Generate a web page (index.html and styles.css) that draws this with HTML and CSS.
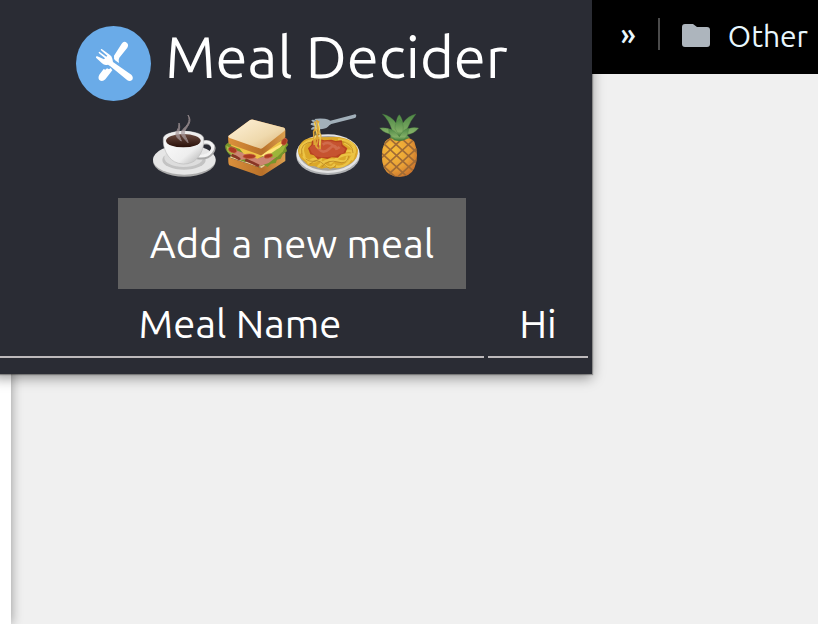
FILE: index.html
```html
<!DOCTYPE html>
<html lang="en">
<head>
<meta charset="utf-8">
<title>Meal Decider</title>
<link rel="stylesheet" href="styles.css">
</head>
<body>
<nav class="bookmarks">
  <button class="more" type="button">»</button>
  <span class="divider"></span>
  <a class="folder" href="#">
    <svg class="folder-icon" viewBox="0 0 28 24" aria-hidden="true"><path d="M3 0h8l4 3h10a3 3 0 0 1 3 3v14a3 3 0 0 1-3 3H3a3 3 0 0 1-3-3V3a3 3 0 0 1 3-3z"/></svg>
    <span>Other</span>
  </a>
</nav>
<div class="page"><div class="sheet"></div></div>

<main class="popup">
  <header class="brand">
    <svg class="logo" viewBox="18 18 225 225" aria-hidden="true">
      <circle cx="130.500" cy="130.500" r="112.500" fill="#6aabe8"/>
      <g fill="#fff">
        <path d="M132 107L155 71Q162 61 171 69Q177 75 172 83L148 113Q145 117 147 129L137 122Q130 116 132 107Z"/>
        <path d="M101 147L106 149L111 145L117 148L122 144L127 151L106 178Q97 187 88 180Q83 174 88 164Z"/>
        <path d="M78 113L96 130Q103 137 114 134L121 139L172 181Q180 186 187 179Q191 171 184 164L129 126L127 116Q126 108 117 103L95 87Q91 86 93 91L112 107L109 110L88 95Q84 95 87 100L105 115L102 118L82 109Q76 109 78 113Z"/>
      </g>
    </svg>
    <h1>Meal Decider</h1>
  </header>

  <div class="meals">
    <svg viewBox="9 15 216 216" role="img" aria-label="Coffee">
      <defs>
        <linearGradient id="cup" x1="0" x2="1" y2="1"><stop stop-color="#fff"/><stop offset=".65" stop-color="#eee"/><stop offset="1" stop-color="#aaa"/></linearGradient>
        <linearGradient id="coffee" x1="0" x2="0" y1="0" y2="1"><stop stop-color="#6a4a40"/><stop offset="1" stop-color="#291009"/></linearGradient>
      </defs>
      <ellipse cx="118" cy="168" rx="94" ry="47" fill="#aaa"/>
      <ellipse cx="118" cy="164" rx="94" ry="45" fill="#e6e6e6"/>
      <ellipse cx="117" cy="165" rx="65" ry="29" fill="#c3c3c3"/>
      <ellipse cx="116" cy="158" rx="58" ry="28" fill="#ddd"/>
      <path d="M166 116C194 104 214 122 200 143C190 156 175 159 157 156" fill="none" stroke="#aaa" stroke-width="13"/>
      <path d="M166 115C194 103 212 122 198 140C188 152 174 155 157 152" fill="none" stroke="#f3f3f3" stroke-width="9"/>
      <path d="M55 101C54 72 177 72 176 101C179 135 159 163 143 171Q115 184 88 170C67 158 53 129 55 101Z" fill="url(#cup)" stroke="#bdbdbd" stroke-width="2"/>
      <ellipse cx="115" cy="103" rx="58" ry="26" fill="#eee"/>
      <ellipse cx="115" cy="107" rx="52" ry="20" fill="url(#coffee)"/>
      <path d="M129 30C143 49 128 62 121 75C113 89 127 99 129 113C117 99 101 88 113 74C126 62 138 49 129 30ZM102 54C108 70 99 79 102 90L109 108C96 100 88 90 96 77Q103 68 102 54Z" fill="#a99b9d" stroke="#a99b9d" stroke-width="3" opacity=".75"/>
    </svg>
    <svg viewBox="12 15 216 216" role="img" aria-label="Sandwich">
      <defs>
        <linearGradient id="bread" x1="0" x2="1" y2="1"><stop stop-color="#fff2d9"/><stop offset=".6" stop-color="#efd9ad"/><stop offset="1" stop-color="#d8ae71"/></linearGradient>
        <linearGradient id="crust" x1="0" x2="1"><stop stop-color="#db913c"/><stop offset=".6" stop-color="#b87029"/><stop offset="1" stop-color="#dca04f"/></linearGradient>
      </defs>
      <path d="M37 157L136 189L208 142V168L142 211Q136 215 129 212L40 181Q36 177 37 157Z" fill="url(#crust)"/>
      <path d="M39 157L108 119L202 145L137 189Z" fill="#edcb94"/>
      <path d="M28 121Q25 132 38 146L49 157L62 160L72 166L87 171L100 169L129 186L143 180L155 186L165 176L179 174L183 164L194 161L201 147L213 139L210 128L217 119L204 96L146 127L54 112Q38 108 28 121Z" fill="#77942b"/>
      <path d="M43 149L59 151L76 165L93 161L130 184L158 174L185 153L173 145L127 160L50 132Z" fill="#cc8572"/>
      <path d="M43 106L133 140L211 99L198 122L164 145L155 147L124 161L96 149L83 146L71 132L46 123Z" fill="#efc446"/>
      <path d="M132 150L203 113L190 131L153 158Z" fill="#ffe47a"/>
      <path d="M31 122L42 128L44 138L57 143L51 151L35 140Z" fill="#a5bd49"/>
      <path d="M158 150L183 133L211 117L201 139L184 155L165 160Z" fill="#9cb53a"/>
      <g fill="#ab3a22" stroke="#c96848" stroke-width="2"><ellipse cx="50" cy="135" rx="13" ry="8" transform="rotate(22 50 135)"/><ellipse cx="100" cy="154" rx="19" ry="7"/><ellipse cx="157" cy="153" rx="13" ry="6" transform="rotate(-12 157 153)"/><ellipse cx="205" cy="110" rx="8" ry="11" transform="rotate(25 205 110)"/></g>
      <path d="M47 150L60 156L72 163M88 164L111 174L129 183" stroke="#883525" stroke-width="8" fill="none"/>
      <path d="M37 93L101 46Q107 42 115 45L204 68Q209 70 208 79V97L139 149Q135 152 130 149L40 117Q35 114 37 93Z" fill="url(#crust)"/>
      <path d="M37 93L101 46Q107 42 115 45L204 68Q210 71 205 78L140 129Q135 133 130 130L41 99Q37 97 37 93Z" fill="url(#bread)"/>
    </svg>
    <svg viewBox="12 15 216 216" role="img" aria-label="Spaghetti">
      <ellipse cx="120" cy="153" rx="95" ry="57" fill="#aeb0b2"/>
      <ellipse cx="120" cy="146" rx="95" ry="58" fill="#e4e4e4"/>
      <ellipse cx="120" cy="145" rx="87" ry="52" fill="#a8a49c"/>
      <path d="M30 137Q35 100 80 97L151 96Q198 102 210 134Q211 161 187 176L167 185L146 190L121 187L100 191L80 184L62 182L48 168Q31 158 30 137Z" fill="#dba729"/>
      <g fill="none" stroke="#ecc445" stroke-width="7" stroke-linecap="round"><path d="M37 143Q35 112 77 105M49 153Q30 109 90 104M47 155Q67 181 99 162M61 173Q80 150 104 174T139 179M91 184Q117 157 148 166T177 157M146 184Q174 189 189 160T170 139M153 103Q205 108 200 143M171 114Q209 131 193 163M127 174Q167 141 195 150"/></g>
      <g fill="none" stroke="#b07c20" stroke-width="2"><path d="M42 148Q33 113 78 110M53 162Q72 178 101 158M65 178Q87 157 107 178T144 182M101 186Q121 162 149 171T182 154M154 108Q195 114 195 144"/></g>
      <path d="M60 130L70 119L72 107L91 101L109 106L130 104L143 108L161 106L164 119L178 130L172 145L160 148L150 158L131 157L118 162L101 158L89 163L78 151L67 148Z" fill="#b8431f"/>
      <path d="M64 128L75 119L77 109L99 109L123 107L145 112L160 111L160 123L172 132L166 144L154 147L143 154L118 156L99 157L84 154L71 143Z" fill="#c65330"/>
      <path d="M104 119Q121 108 134 121T155 126M91 130Q105 149 124 131T146 135" fill="none" stroke="#d06b4b" stroke-width="8"/>
      <path d="M81 64L68 59Q67 51 79 54L70 47Q72 42 84 47L79 42Q91 39 111 41Q121 42 127 47L196 29Q204 26 205 32Q205 38 198 40L130 57Q123 60 120 65Q112 73 85 73L70 74Q66 69 81 64Z" fill="#a2b0ba"/>
      <g fill="none" stroke="#dda535" stroke-width="5"><path d="M80 49Q87 66 77 80L79 120M86 45Q98 75 86 96T91 131M92 48Q84 77 98 90L96 132M81 70Q96 94 85 121"/></g>
      <path d="M78 53Q91 77 80 101M90 53Q99 77 95 121" fill="none" stroke="#f5dc6a" stroke-width="3"/>
    </svg>
    <svg viewBox="-2 15 216 216" role="img" aria-label="Pineapple">
      <defs>
        <radialGradient id="fruit" cx=".35" cy=".35" r=".7"><stop stop-color="#f6bd38"/><stop offset=".6" stop-color="#e9a036"/><stop offset="1" stop-color="#c7702c"/></radialGradient>
        <linearGradient id="leaf" x2="0" y2="1"><stop stop-color="#4d8745"/><stop offset=".7" stop-color="#82af66"/><stop offset="1" stop-color="#447b38"/></linearGradient>
        <clipPath id="fruit-shape"><path d="M61 110Q73 94 104 96Q137 94 149 110Q165 152 149 190Q137 215 104 216Q70 214 58 189Q43 148 61 110Z"/></clipPath>
      </defs>
      <g clip-path="url(#fruit-shape)">
        <path fill="url(#fruit)" d="M45 90h118v130H45z"/>
        <path d="M20 82L172 222M20 116L148 234M20 150L118 240M44 72L184 201M80 72L190 173M116 72L190 140M30 144L106 74M30 178L142 74M30 212L180 74M52 226L190 99M88 226L190 133M124 226L190 166" fill="none" stroke="#a06b35" stroke-width="5"/>
      </g>
      <g fill="url(#leaf)" stroke="#477a3d" stroke-width="1">
        <path d="M84 87Q60 87 45 69Q65 66 82 75Q72 44 53 27Q80 33 94 54Q98 32 104 29Q110 34 115 54Q130 32 154 27Q136 48 127 73Q143 64 162 69Q148 87 126 89L135 98Q114 110 90 106L76 97Z"/>
        <path d="M85 98Q70 88 72 72Q92 75 104 95Q112 75 132 69Q132 90 120 102Q101 113 85 98Z"/>
        <path d="M91 70Q91 51 104 42Q119 54 115 78L104 95Z"/>
      </g>
    </svg>
  </div>

  <button class="add" type="button">Add a new meal</button>

  <table class="list">
    <colgroup><col><col class="hide-col"></colgroup>
    <thead><tr><th scope="col">Meal Name</th><th scope="col">Hi</th></tr></thead>
  </table>
</main>
</body>
</html>
```
FILE: styles.css
```css
* { box-sizing: border-box; }

body {
  margin: 0;
  min-height: 100vh;
  display: flex;
  flex-direction: column;
  position: relative;
  overflow-x: hidden;
  background: #f0f0f0;
  font-family: Ubuntu, "Noto Sans", sans-serif;
  color: #fff;
}

.bookmarks {
  display: flex;
  align-items: center;
  justify-content: flex-end;
  gap: 22px;
  height: 74px;
  padding: 0 10px 2px 0;
  background: #000;
  color: #e8f7fe;
  font-size: 30px;
}

.more {
  padding: 0 0 4px;
  border: 0;
  background: none;
  color: inherit;
  font: inherit;
  font-weight: 500;
  line-height: 32px;
}

.divider {
  width: 2px;
  height: 32px;
  margin-bottom: 4px;
  background: #4b4b4b;
}

.folder {
  display: flex;
  align-items: center;
  gap: 18px;
  color: inherit;
  text-decoration: none;
}

.folder-icon {
  width: 28px;
  height: 24px;
  fill: #adb5bd;
}

.page {
  flex: 1;
  display: flex;
}

.sheet {
  width: 11px;
  background: #fff;
  box-shadow: 0 0 12px rgba(0, 0, 0, 0.4);
}

/* Extension popup, floating over the browser window */
.popup {
  position: absolute;
  top: 0;
  left: -8px;
  right: 226px;
  display: flex;
  flex-direction: column;
  align-items: center;
  padding: 24px 0 16px;
  background: #2a2c34;
  box-shadow: 0 0 1px 1px rgba(0, 0, 0, 0.3), 0 4px 12px rgba(0, 0, 0, 0.4);
}

.brand {
  display: flex;
  align-items: center;
  gap: 14px;
  height: 78px;
}

.logo {
  width: 75px;
  height: 75px;
}

h1 {
  margin: 0 0 12px;
  font-size: 58px;
  font-weight: 400;
  line-height: 64px;
  white-space: nowrap;
}

.meals {
  display: flex;
  margin: 8px 0 16px;
}

.meals svg {
  width: 72px;
  height: 72px;
}

.add {
  padding: 20px 32px;
  border: 0;
  background: #616161;
  color: #fff;
  font: inherit;
  font-size: 40px;
  line-height: 51px;
  white-space: nowrap;
}

.list {
  width: 100%;
  table-layout: fixed;
  border-collapse: separate;
  border-spacing: 4px 0;
}

.hide-col { width: 100px; }

.list th {
  height: 69px;
  padding: 2px 0 0;
  border-bottom: 2px solid #bdb9bb;
  font-size: 40px;
  font-weight: 400;
  line-height: 52px;
}
```
